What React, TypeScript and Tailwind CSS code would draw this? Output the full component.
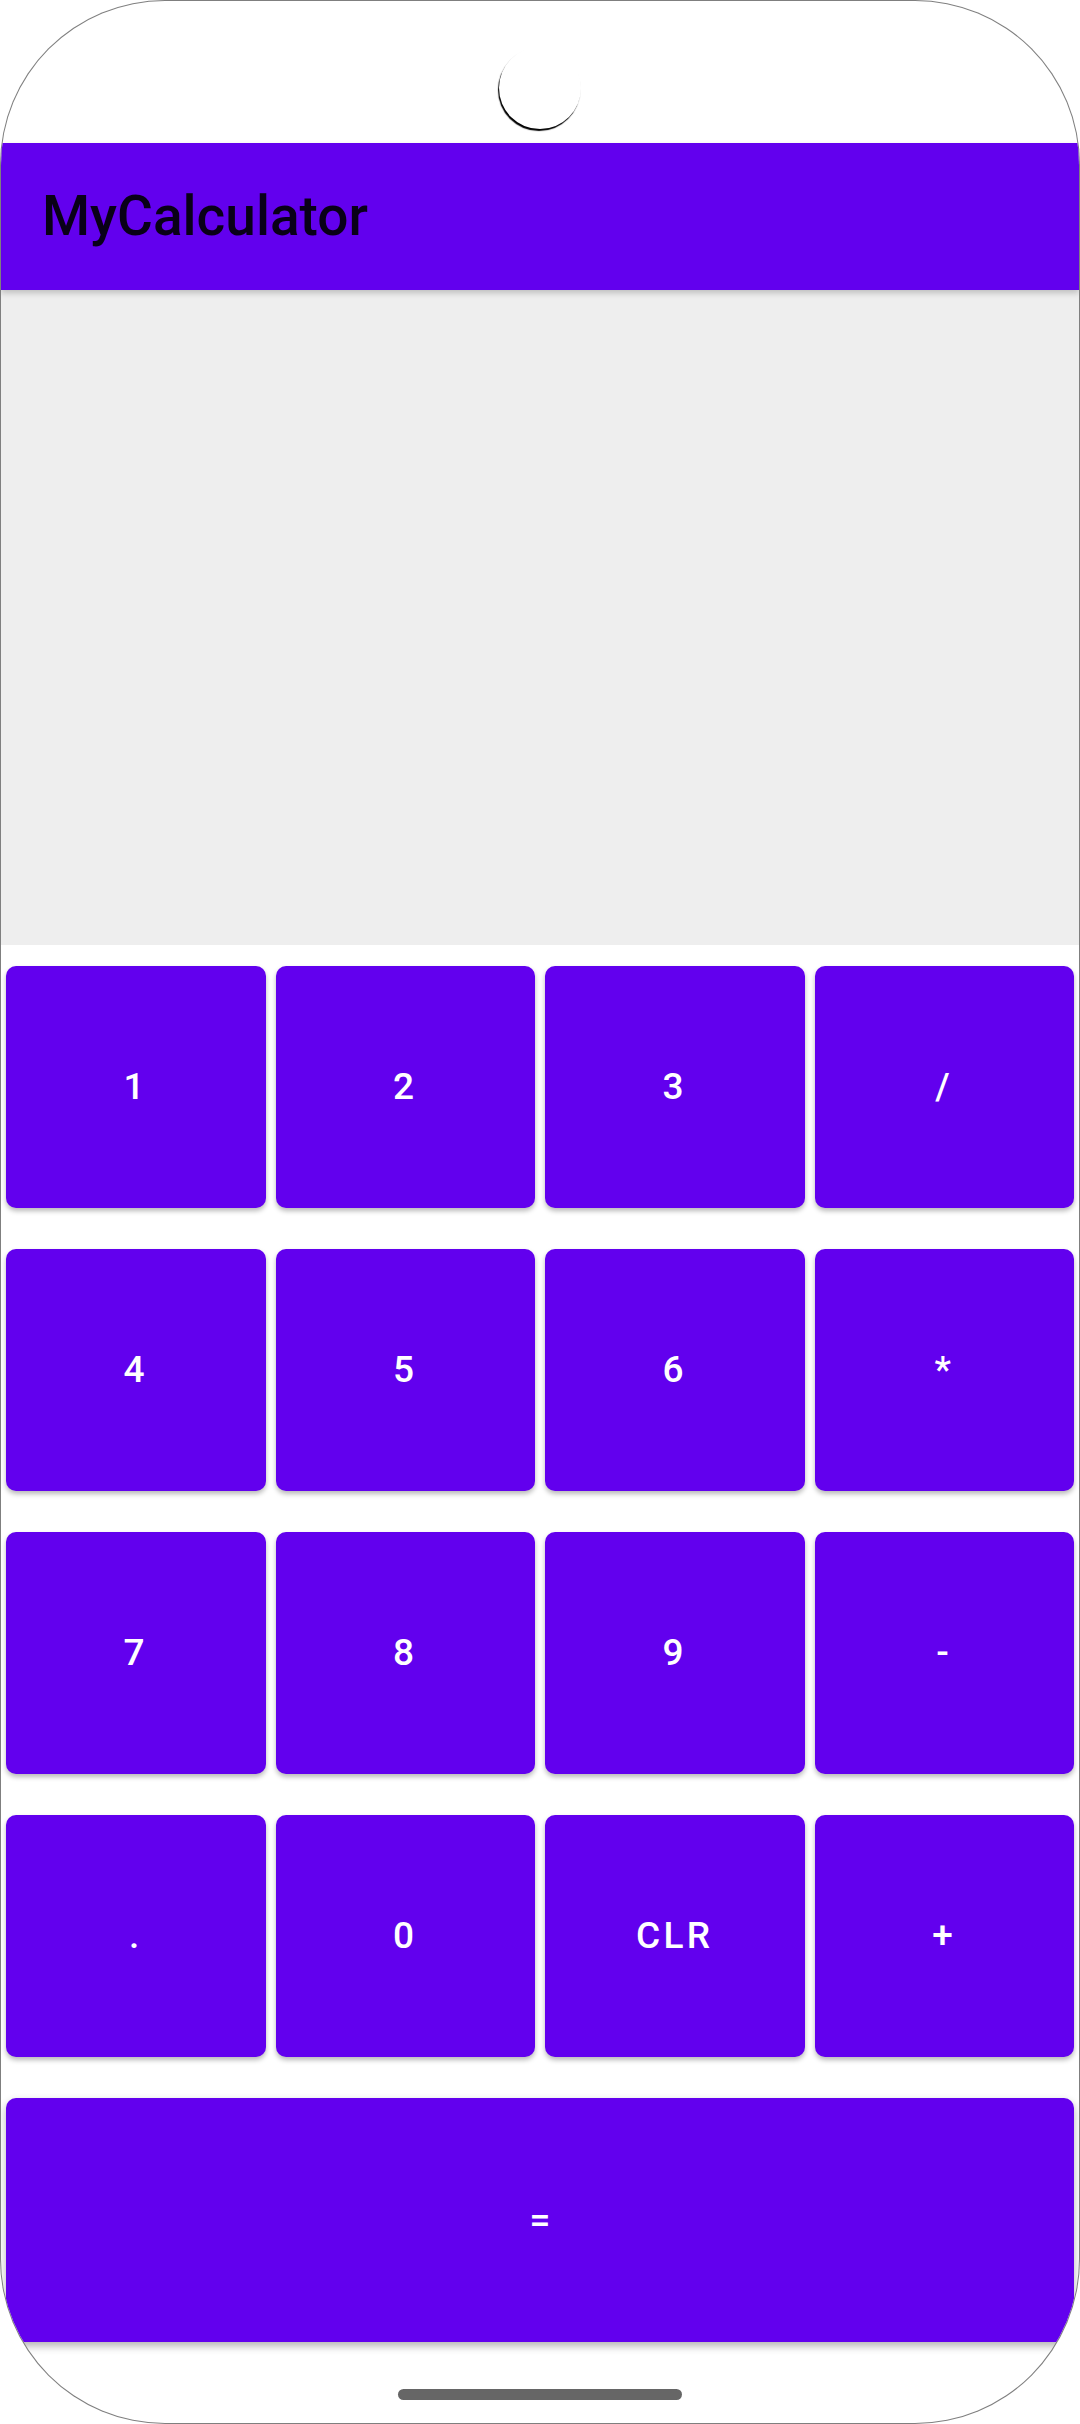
const KEYS = ['1', '2', '3', '/', '4', '5', '6', '*', '7', '8', '9', '-', '.', '0', 'CLR', '+']

function Key({ label }: { label: string }) {
  return (
    <button className="h-[242px] rounded-[10px] bg-[#6200EE] text-white text-[37px] font-medium tracking-[0.09em] shadow-[0_3px_5px_rgba(0,0,0,0.28)] flex items-center justify-center">
      {label}
    </button>
  )
}

export default function App() {
  return (
    <div
      className="w-[1080px] h-[2424px] bg-white overflow-hidden rounded-[165px] border border-black/50 flex flex-col"
      style={{ fontFamily: 'Roboto, "Noto Sans", sans-serif' }}
    >
      {/* status bar with punch-hole camera */}
      <div className="h-[142px] shrink-0 flex justify-center pt-[46px]">
        <div className="w-[82px] h-[82px] rounded-full bg-white shadow-[-1px_2px_1px_#000]" />
      </div>

      <header className="relative z-10 h-[147px] shrink-0 bg-[#6200EE] px-[41px] flex items-center shadow-[0_3px_6px_rgba(0,0,0,0.2)]">
        <h1 className="text-[55px] font-medium text-black/90 leading-none">MyCalculator</h1>
      </header>

      <div className="h-[655px] shrink-0 bg-[#eeeeee]" />

      <div className="px-[5px] pt-[21px] grid grid-cols-4 gap-x-[10px] gap-y-[41px]">
        {KEYS.map((k) => (
          <Key key={k} label={k} />
        ))}
      </div>

      <button className="relative mx-[5px] mt-[41px] h-[244px] shrink-0 rounded-t-[10px] bg-[#6200EE] text-white text-[37px] font-medium shadow-[0_4px_8px_rgba(0,0,0,0.3)] flex items-center justify-center">
        =
      </button>

      <div className="flex-1 flex justify-center pt-[47px]">
        <div className="w-[284px] h-[11px] rounded-full bg-[#666666]" />
      </div>
    </div>
  )
}
